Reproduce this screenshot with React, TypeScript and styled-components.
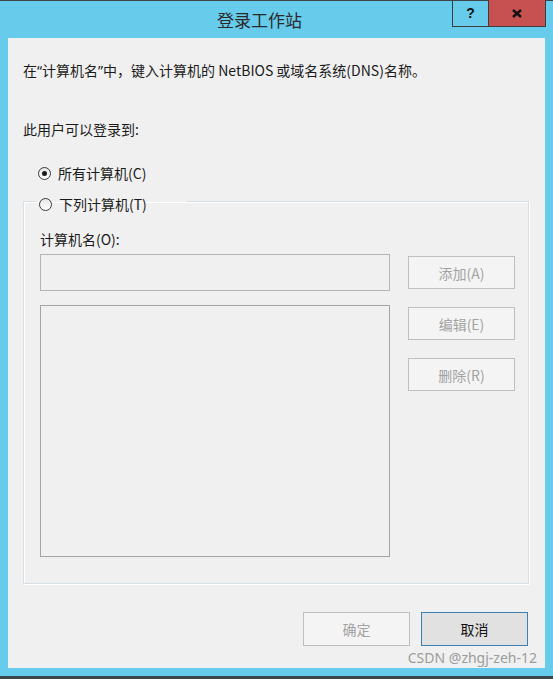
import React, { useState } from 'react'
import styled, { createGlobalStyle } from 'styled-components'

const GlobalStyle = createGlobalStyle`
  html, body {
    margin: 0;
    padding: 0;
    background: #67cbeb;
  }
  body {
    font-family: "Noto Sans CJK SC", "Noto Sans", sans-serif;
  }
`

const FONT = `"Noto Sans CJK SC", "Noto Sans", sans-serif`

const Window = styled.div`
  position: relative;
  width: 553px;
  height: 679px;
  box-sizing: border-box;
  background: #67cbeb;
  border-top: 1px solid #3f4448;
  border-bottom: 3px solid #3a464c;
  display: flex;
  flex-direction: column;
  font-family: ${FONT};
`

const TitleBar = styled.div`
  height: 37px;
  display: flex;
  align-items: flex-start;
`

const Title = styled.div`
  margin-left: 217px;
  margin-top: 7px;
  font-size: 17px;
  line-height: 24px;
  color: #2a2a2a;
  flex: 1;
`

const Controls = styled.div`
  display: flex;
  margin-right: 7px;
  margin-top: -1px;
  height: 27px;
  border: 1px solid #3d3d3d;
  border-top: none;
  box-sizing: border-box;
`

const CtrlButton = styled.div<{ $close?: boolean }>`
  width: ${(p) => (p.$close ? 56 : 35)}px;
  height: 100%;
  display: flex;
  align-items: center;
  justify-content: center;
  background: ${(p) => (p.$close ? '#c75050' : 'transparent')};
  border-left: ${(p) => (p.$close ? '1px solid #3d3d3d' : 'none')};
  font-family: "Liberation Sans", Arial, sans-serif;
  font-weight: 700;
  font-size: 14px;
  color: #111;
`

const Frame = styled.div`
  flex: 1;
  display: flex;
  padding: 0 8px 8px 8px;
`

const Client = styled.div`
  flex: 1;
  background: #f0f0f0;
  display: flex;
  flex-direction: column;
  padding: 22px 16px 22px 15px;
  font-size: 14px;
  line-height: 20px;
  color: #1b1b1b;
`

const Text = styled.div<{ $indent?: number; $top?: number }>`
  height: 20px;
  padding-left: ${(p) => p.$indent ?? 0}px;
  margin-top: ${(p) => p.$top ?? 0}px;
  white-space: nowrap;
`

const Quote = styled.span`
  font-family: "Noto Sans", sans-serif;
  line-height: 1;
`

const RadioRow = styled.label<{ $top?: number }>`
  display: flex;
  align-items: center;
  gap: 7px;
  margin-top: ${(p) => p.$top ?? 0}px;
  padding-left: 15px;
  height: 20px;
  cursor: default;
`

const RadioCircle = styled.span<{ $checked: boolean }>`
  width: 13px;
  height: 13px;
  box-sizing: border-box;
  border-radius: 50%;
  border: 1px solid #3b3b3b;
  background: linear-gradient(#e6e6e6, #ffffff);
  display: flex;
  align-items: center;
  justify-content: center;
  &::after {
    content: '';
    width: 5px;
    height: 5px;
    border-radius: 50%;
    background: #1a1a1a;
    display: ${(p) => (p.$checked ? 'block' : 'none')};
  }
`

const GroupBox = styled.fieldset`
  margin: 5px 0 0 0;
  padding: 0 13px 26px 16px;
  border: 1px solid #d5dfe5;
  border-radius: 0;
  box-shadow: inset 1px 1px 0 #ffffff, 1px 1px 0 #ffffff;
  min-width: 0;
`

const Legend = styled.legend`
  padding: 6px 40px 0 0;
  margin-left: -3px;
  display: flex;
  align-items: center;
  height: 20px;
  box-sizing: content-box;
`

const LegendInner = styled.span`
  display: flex;
  align-items: center;
  gap: 7px;
  padding-left: 2px;
`

const FieldRow = styled.div`
  display: flex;
  gap: 18px;
  margin-top: 5px;
`

const LeftCol = styled.div`
  display: flex;
  flex-direction: column;
  gap: 14px;
`

const Input = styled.div`
  width: 350px;
  height: 37px;
  box-sizing: border-box;
  border: 1px solid #b4b4b4;
  background: #f0f0f0;
`

const ListBox = styled.div`
  width: 350px;
  height: 252px;
  box-sizing: border-box;
  border: 1px solid #a4a4a4;
  background: #f0f0f0;
`

const RightCol = styled.div`
  display: flex;
  flex-direction: column;
  gap: 18px;
  margin-top: 2px;
`

const Button = styled.div<{ $default?: boolean; $disabled?: boolean }>`
  width: 107px;
  height: 33px;
  box-sizing: border-box;
  display: flex;
  align-items: center;
  justify-content: center;
  font-size: 14px;
  border: 1px solid ${(p) => (p.$default ? '#3c7fb1' : '#bfbfbf')};
  background: ${(p) => (p.$default ? '#e1e1e1' : '#f4f4f4')};
  color: ${(p) => (p.$disabled ? '#a3a3a3' : '#111')};
`

const Footer = styled.div`
  margin-top: auto;
  display: flex;
  justify-content: flex-end;
  gap: 11px;
  padding-right: 1px;
`

const FooterButton = styled(Button)`
  height: 34px;
`

const Watermark = styled.div`
  position: absolute;
  right: 16px;
  bottom: 9px;
  font-family: "Noto Sans", sans-serif;
  font-size: 14px;
  line-height: 18px;
  color: #9c9c9c;
`

function CloseIcon() {
  return (
    <svg width="10" height="9" viewBox="0 0 10 9">
      <path d="M1 1 L9 8 M9 1 L1 8" stroke="#111" strokeWidth="2.4" strokeLinecap="butt" />
    </svg>
  )
}

export default function App() {
  const [allComputers, setAllComputers] = useState(true)

  return (
    <Window>
      <GlobalStyle />
      <TitleBar>
        <Title>登录工作站</Title>
        <Controls>
          <CtrlButton>?</CtrlButton>
          <CtrlButton $close>
            <CloseIcon />
          </CtrlButton>
        </Controls>
      </TitleBar>
      <Frame>
        <Client>
          <Text>
            在<Quote>“</Quote>计算机名<Quote>”</Quote>中，键入计算机的 NetBIOS 或域名系统(DNS)名称。
          </Text>
          <Text $top={39}>此用户可以登录到:</Text>
          <RadioRow $top={24} onClick={() => setAllComputers(true)}>
            <RadioCircle $checked={allComputers} />
            所有计算机(C)
          </RadioRow>
          <GroupBox>
            <Legend>
              <LegendInner onClick={() => setAllComputers(false)}>
                <RadioCircle $checked={!allComputers} />
                下列计算机(T)
              </LegendInner>
            </Legend>
            <Text $top={15}>计算机名(O):</Text>
            <FieldRow>
              <LeftCol>
                <Input />
                <ListBox />
              </LeftCol>
              <RightCol>
                <Button $disabled>添加(A)</Button>
                <Button $disabled>编辑(E)</Button>
                <Button $disabled>删除(R)</Button>
              </RightCol>
            </FieldRow>
          </GroupBox>
          <Footer>
            <FooterButton $disabled>确定</FooterButton>
            <FooterButton $default>取消</FooterButton>
          </Footer>
        </Client>
      </Frame>
      <Watermark>CSDN @zhgj-zeh-12</Watermark>
    </Window>
  )
}
